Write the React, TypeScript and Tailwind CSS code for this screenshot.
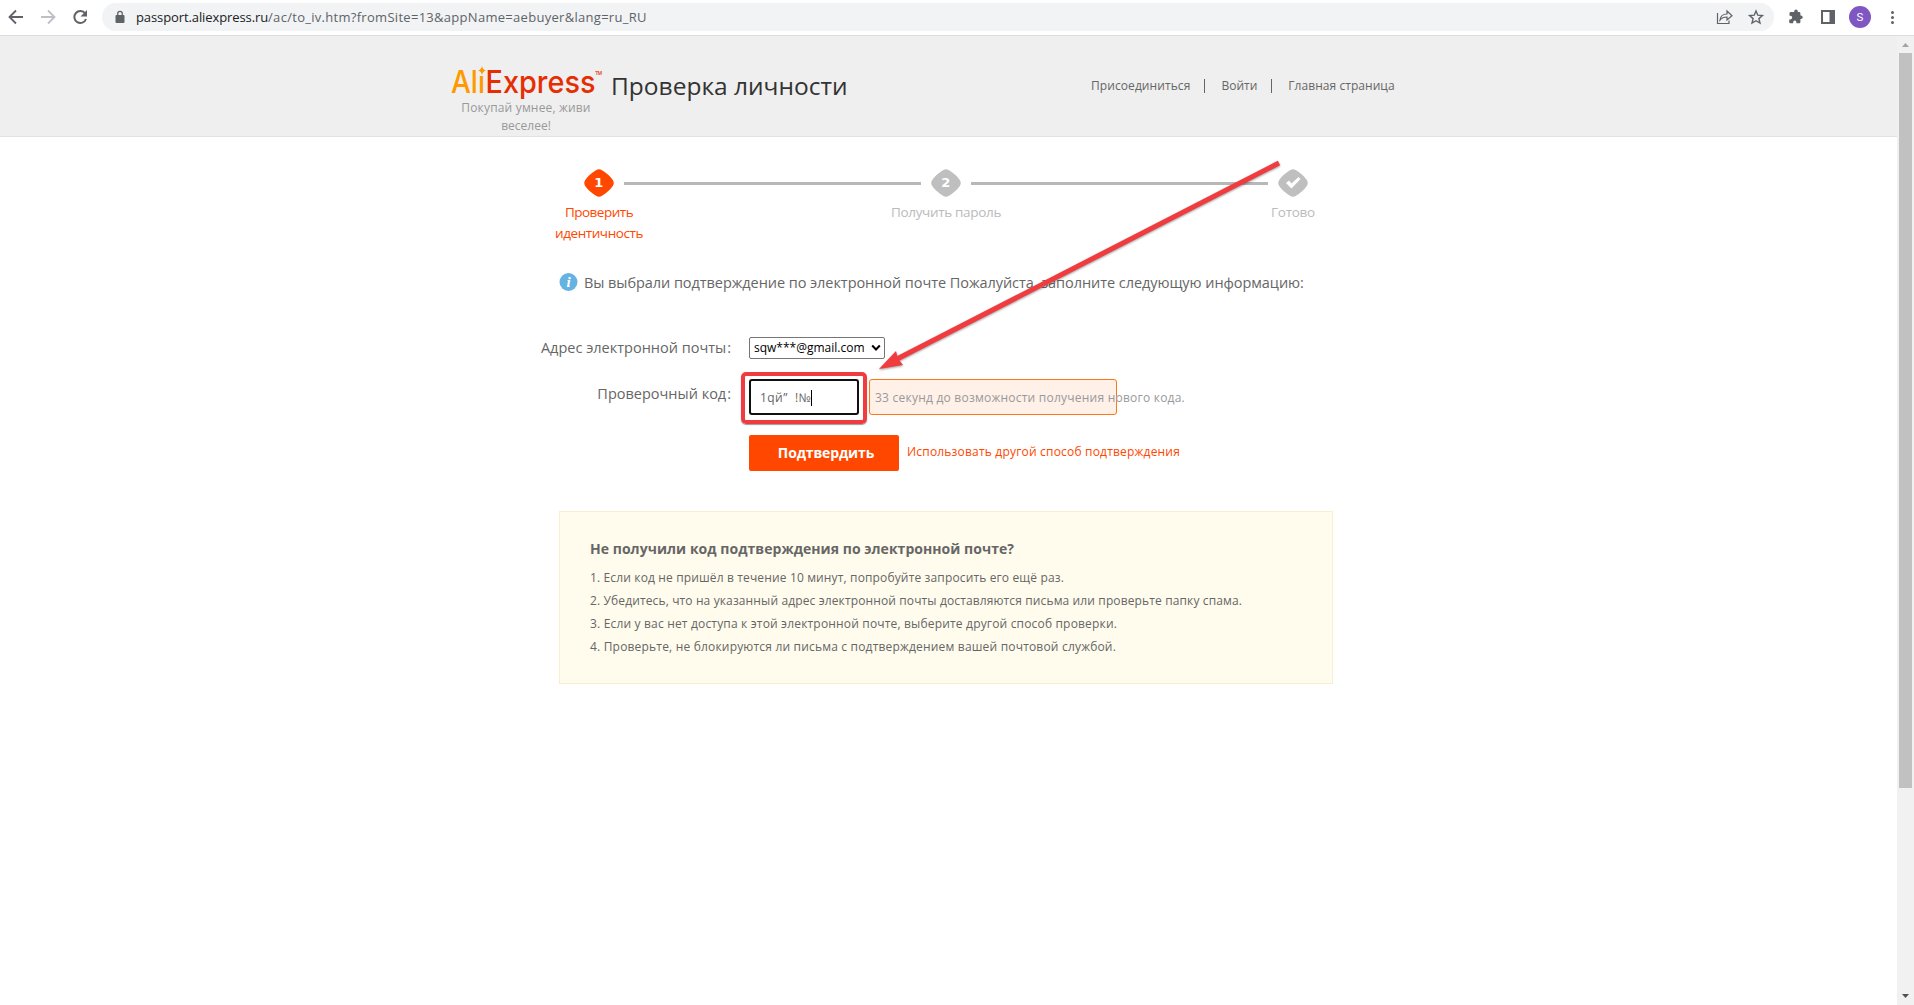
import React from 'react';

const T = ({ className = '', children }: { className?: string; children: React.ReactNode }) => (
  <span className={'inline-block whitespace-pre ' + className}>{children}</span>
);

function Toolbar() {
  return (
    <div className="flex h-9 items-start border-b border-[#dadce0] bg-white">
      <div className="flex h-[34px] w-[102px] shrink-0 items-center">
        <svg width="102" height="34" fill="none" stroke="#5f6368" strokeWidth="1.8">
          <path d="M23 17H10M16 10.5L9.500 17l6.500 6.500" />
          <path d="M41 17h13M48 10.500l6.500 6.500-6.500 6.500" stroke="#bdc1c6" />
          <path d="M85.200 13.500A6 6 0 1 0 86 19" strokeWidth="2" />
          <path d="M87 10v6.500h-6.500z" fill="#5f6368" stroke="none" />
        </svg>
      </div>
      <div className="mt-[3px] flex h-7 w-[1672px] items-center rounded-full bg-[#f1f3f4] pr-[2px] pl-[13px]">
        <svg width="10" height="14" viewBox="0 0 10 14" className="mr-[11px]">
          <rect x="0.500" y="5" width="9" height="8" rx="1" fill="#5f6368" />
          <path d="M2.700 5.500V3.700a2.300 2.300 0 0 1 4.600 0V5.500" fill="none" stroke="#5f6368" strokeWidth="1.300" />
        </svg>
        <span className="text-[13px] leading-7">
          <T className="tracking-[-0.1px] text-[#202124]">passport.aliexpress.ru</T>
          <T className="tracking-[0.29px] text-[#5f6368]">/ac/to_iv.htm?fromSite=13&amp;appName=aebuyer&amp;lang=ru_RU</T>
        </span>
        <svg className="ml-auto" width="56" height="28" viewBox="1716 3 56 28" fill="none" stroke="#5f6368" strokeWidth="1.200">
          <path d="M1717.500 13v10.500h11.500v-3M1720 20c.5-4 3-6 7-6v-3l5 4.700-5 4.300v-3c-3 0-5.200.8-7 3z" />
          <path d="M1756 11l1.800 4.200 4.600.4-3.500 3 1.100 4.500-4-2.400-4 2.400 1.100-4.500-3.500-3 4.600-.4z" strokeWidth="1.400" />
        </svg>
      </div>
      <svg width="140" height="34" viewBox="1774 0 140 34">
        <path d="M1801 12.500h-2.600V11.800a1.800 1.800 0 0 0-3.600 0v.7h-3.500a1.200 1.200 0 0 0-1.200 1.200v2.600h.9a1.800 1.800 0 0 1 0 3.600h-1.200v2.600a1.200 1.200 0 0 0 1.200 1.200h2.800v-1a1.600 1.600 0 0 1 3.200 0v1h2.800a1.200 1.200 0 0 0 1.200-1.200v-3.100h.6a1.700 1.700 0 0 0 0-3.400h-.6v-2.300a1.200 1.200 0 0 0-1.200-1.200z" fill="#5f6368" transform="translate(-.6 -.5)" />
        <path d="M1821 10h14v14h-14zM1823 12v10h6.500v-10z" fill="#5f6368" fillRule="evenodd" />
        <circle cx="1860" cy="17" r="11" fill="#7e57c2" />
        <text x="1860" y="21" fontSize="11.500" fill="#fff" textAnchor="middle" fontFamily="Roboto">S</text>
        <g fill="#5f6368"><circle cx="1892.500" cy="12.500" r="1.500" /><circle cx="1892.500" cy="17.500" r="1.500" /><circle cx="1892.500" cy="22.500" r="1.500" /></g>
      </svg>
    </div>
  );
}

function Header() {
  return (
    <header className="flex h-[101px] items-start border-b border-[#e2e2e2] bg-[#efefef] pl-[449px]">
      <div className="w-[154px] pt-[28px] text-center text-xs text-[#999]">
        <svg width="156" height="35" viewBox="449 64 156 35" className="block overflow-visible">
          <g fontFamily="Inter" fontSize="31.500" fontWeight="500">
            <text x="451" y="92.500" fill="#ff9900" textLength="34" lengthAdjust="spacingAndGlyphs">Alı</text>
            <text x="485.500" y="92.500" fill="#e62e04" textLength="110" lengthAdjust="spacingAndGlyphs">Express</text>
            <text x="595" y="75" fill="#e62e04" fontSize="5" textLength="7">TM</text>
          </g>
          <path d="M482 66q.8 3.600 4 4.500q-3.200.9-4 4.500q-.8-3.600-4-4.500q3.200-.9 4-4.500z" fill="#ff9900" />
        </svg>
        <div className="h-[18px] leading-[18px]"><T className="tracking-[0.17px]">Покупай умнее, живи</T></div>
        <div className="h-[18px] leading-[18px]"><T>веселее!</T></div>
      </div>
      <h1 className="ml-[8px] w-[480px] pt-[29px] text-[24.5px] leading-[41px] text-[#333]"><T>Проверка личности</T></h1>
      <nav className="mt-[40px] flex h-5 items-center text-xs text-[#666]">
        <T className="tracking-[0.08px]">Присоединиться</T>
        <i className="mr-4 ml-[14px] h-[14px] w-px bg-[#666]" />
        <T>Войти</T>
        <i className="mr-4 ml-[14px] h-[14px] w-px bg-[#666]" />
        <T className="tracking-[0.05px]">Главная страница</T>
      </nav>
    </header>
  );
}

const Diamond = ({ color, children }: { color: string; children: React.ReactNode }) => (
  <svg width="30" height="28" viewBox="0 0 30 28" className="block">
    <path d="M12 1.300Q15-1 18 1.300Q25 5.500 28.800 11Q30.700 14 28.800 17Q25 22.500 18 26.700Q15 29 12 26.700Q5 22.500 1.200 17Q-.7 14 1.200 11Q5 5.500 12 1.300z" fill={color} />
    {children}
  </svg>
);
const Num = ({ n }: { n: string }) => (
  <text x="14.700" y="18" fontSize="13" fontWeight="700" fill="#fff" textAnchor="middle" fontFamily="DejaVu Sans">{n}</text>
);

function Steps() {
  return (
    <div className="flex pt-[32px] pl-[544px] text-[13.5px] leading-[21px] text-[#bbb]">
      <div className="flex w-[110px] flex-col items-center text-[#ff4700]">
        <Diamond color="#ff4700"><Num n="1" /></Diamond>
        <div className="mt-[5px] flex flex-col items-center"><T className="tracking-[-0.5px]">Проверить</T><T className="tracking-[-0.42px]">идентичность</T></div>
      </div>
      <i className="-mr-[31px] -ml-[30px] mt-[13px] h-[3px] w-[297px] bg-[#b8b8b8]" />
      <div className="flex w-[112px] flex-col items-center">
        <Diamond color="#bfbfbf"><Num n="2" /></Diamond>
        <div className="mt-[5px]"><T className="tracking-[-0.33px]">Получить пароль</T></div>
      </div>
      <i className="-ml-[31px] mt-[13px] h-[3px] w-[297px] bg-[#b8b8b8]" />
      <div className="-ml-[5px] flex w-[60px] flex-col items-center">
        <Diamond color="#bfbfbf"><path d="M8 14l3-2.500 2.500 3 7-6.500 2 2-9 9.500z" fill="#fff" /></Diamond>
        <div className="mt-[5px]"><T className="tracking-[-0.25px]">Готово</T></div>
      </div>
    </div>
  );
}

function Notice() {
  return (
    <div className="mt-[28px] flex h-5 items-center pl-[559px] text-[14.5px] leading-5 text-[#666]">
      <svg width="19" height="20" className="mr-[6px]">
        <circle cx="9.500" cy="10" r="9" fill="#66b3e1" />
        <text x="9.500" y="15" fontSize="15" fontStyle="italic" fontWeight="700" fill="#fff" textAnchor="middle" fontFamily="Liberation Serif">i</text>
      </svg>
      <T className="pt-px tracking-[-0.06px]">Вы выбрали подтверждение по электронной почте Пожалуйста, заполните следующую информацию:</T>
    </div>
  );
}

function Form() {
  return (
    <div className="pt-[45px] text-[#666]">
      <div className="flex h-[22px] items-center">
        <div className="mr-[18px] flex w-[731px] justify-end text-[14.5px] leading-[22px]"><T>Адрес электронной почты</T><T className="ml-px">:</T></div>
        <div className="flex h-[22px] w-[136px] items-center rounded-[2px] border border-[#767676] bg-white pl-1 text-xs text-black">
          <T>sqw***@gmail.com</T>
          <svg width="10" height="8" className="ml-[6px]"><path d="M1.200 1.500L5 5.500l3.800-4" stroke="#000" strokeWidth="2" fill="none" /></svg>
        </div>
      </div>
      <div className="mt-5 flex h-9">
        <div className="mr-[18px] flex w-[731px] justify-end pt-[5px] text-[14.5px] leading-[20px]"><T>Проверочный код</T><T className="ml-px">:</T></div>
        <div className="relative flex h-9 w-[110px] items-center rounded-[3px] border-2 border-[#101010] bg-white pt-px pl-[9px] text-xs">
          <T className="tracking-[0.45px]">1qй”  !№</T>
          <i className="h-4 w-px bg-black" />
          <div className="absolute -inset-x-[10px] -top-[9px] -bottom-[11px] rounded-[5px] border-4 border-[#f03c3f] shadow-[0_1px_1px_rgba(0,0,0,0.4)]" />
        </div>
        <div className="ml-[10px] flex h-9 w-[248px] items-center rounded-[3px] border border-[#ff7519] bg-[#fff0e8] pt-px pl-[5px] text-xs text-[#999]">
          <T className="tracking-[0.23px]">33 секунд до возможности получения нового кода.</T>
        </div>
      </div>
      <div className="mt-5 flex pl-[749px]">
        <button className="flex h-9 w-[150px] items-center justify-center rounded-[2px] bg-[#ff4700] pl-1 text-sm font-bold text-white"><T className="tracking-[-0.14px]">Подтвердить</T></button>
        <a className="ml-2 text-xs leading-[33px] text-[#ff4700]"><T className="tracking-[0.19px]">Использовать другой способ подтверждения</T></a>
      </div>
    </div>
  );
}

function Help() {
  return (
    <section className="mt-[40px] ml-[559px] h-[173px] w-[774px] border border-[#f7efcf] bg-[#fffced] pt-[26px] pl-[30px] text-xs text-[#666]">
      <h2 className="h-[28px] text-sm leading-[22px] font-bold"><T className="tracking-[0.04px]">Не получили код подтверждения по электронной почте?</T></h2>
      <ol className="leading-[23px]">
        <li className="h-[23px]"><T className="tracking-[0.142px]">1. Если код не пришёл в течение 10 минут, попробуйте запросить его ещё раз.</T></li>
        <li className="h-[23px]"><T className="tracking-[0.125px]">2. Убедитесь, что на указанный адрес электронной почты доставляются письма или проверьте папку спама.</T></li>
        <li className="h-[23px]"><T className="tracking-[0.173px]">3. Если у вас нет доступа к этой электронной почте, выберите другой способ проверки.</T></li>
        <li className="h-[23px]"><T className="tracking-[0.184px]">4. Проверьте, не блокируются ли письма с подтверждением вашей почтовой службой.</T></li>
      </ol>
    </section>
  );
}

export default function App() {
  return (
    <div className="relative flex h-[1005px] w-[1914px] flex-col overflow-hidden bg-white font-['Open_Sans','Noto_Sans',sans-serif]">
      <Toolbar />
      <div className="flex flex-1">
        <main className="w-[1897px]">
          <Header />
          <Steps />
          <Notice />
          <Form />
          <Help />
        </main>
        <aside className="flex w-[17px] flex-col items-center bg-[#f1f1f1]">
          <svg width="17" height="17"><path d="M5 11h7L8.500 7z" fill="#a3a3a3" /></svg>
          <div className="h-[735px] w-[13px] bg-[#c1c1c1]" />
          <svg width="17" height="17" className="mt-auto"><path d="M5 6h7l-3.500 4z" fill="#505050" /></svg>
        </aside>
      </div>
      <svg className="pointer-events-none absolute top-[155px] left-[870px] drop-shadow-[0_1px_1px_rgba(0,0,0,0.4)]" width="420" height="225" viewBox="870 155 420 225">
        <path d="M1279 163L895 360" stroke="#f03c3f" strokeWidth="5" />
        <path d="M879 369L896 351L898 358.500L903 365z" fill="#f03c3f" />
      </svg>
    </div>
  );
}
